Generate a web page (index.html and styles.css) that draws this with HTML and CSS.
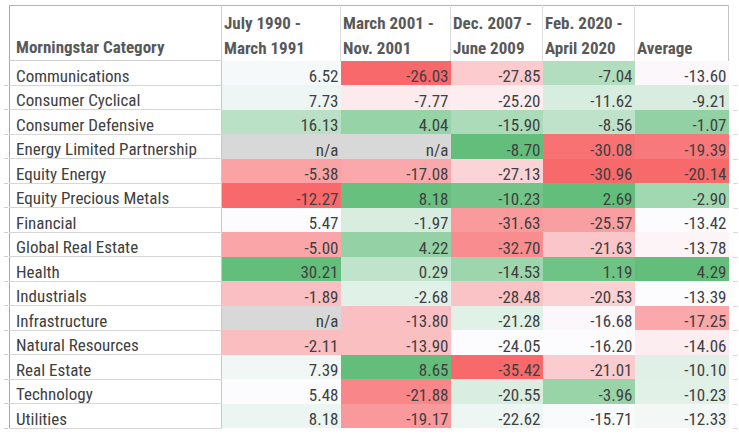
FILE: index.html
```html
<!DOCTYPE html>
<html lang="en">
<head>
<meta charset="utf-8">
<title>Morningstar Category returns</title>
<link rel="stylesheet" href="styles.css">
</head>
<body>
<div class="sheet">
  <table class="grid" id="grid">
    <colgroup>
      <col class="c-cat"><col class="c-1"><col class="c-2"><col class="c-3"><col class="c-4"><col class="c-5">
    </colgroup>
    <thead>
      <tr>
        <th class="cat">Morningstar Category</th>
        <th>July 1990 -<br>March 1991</th>
        <th>March 2001 -<br>Nov. 2001</th>
        <th>Dec. 2007 -<br>June 2009</th>
        <th>Feb. 2020 -<br>April 2020</th>
        <th class="last">Average</th>
      </tr>
    </thead>
    <tbody>
      <tr><td class="name">Communications</td><td class="num">6.52</td><td class="num">-26.03</td><td class="num">-27.85</td><td class="num">-7.04</td><td class="num">-13.60</td></tr>
      <tr><td class="name">Consumer Cyclical</td><td class="num">7.73</td><td class="num">-7.77</td><td class="num">-25.20</td><td class="num">-11.62</td><td class="num">-9.21</td></tr>
      <tr><td class="name">Consumer Defensive</td><td class="num">16.13</td><td class="num">4.04</td><td class="num">-15.90</td><td class="num">-8.56</td><td class="num">-1.07</td></tr>
      <tr><td class="name">Energy Limited Partnership</td><td class="num na">n/a</td><td class="num na">n/a</td><td class="num">-8.70</td><td class="num">-30.08</td><td class="num">-19.39</td></tr>
      <tr><td class="name">Equity Energy</td><td class="num">-5.38</td><td class="num">-17.08</td><td class="num">-27.13</td><td class="num">-30.96</td><td class="num">-20.14</td></tr>
      <tr><td class="name">Equity Precious Metals</td><td class="num">-12.27</td><td class="num">8.18</td><td class="num">-10.23</td><td class="num">2.69</td><td class="num">-2.90</td></tr>
      <tr><td class="name">Financial</td><td class="num">5.47</td><td class="num">-1.97</td><td class="num">-31.63</td><td class="num">-25.57</td><td class="num">-13.42</td></tr>
      <tr><td class="name">Global Real Estate</td><td class="num">-5.00</td><td class="num">4.22</td><td class="num">-32.70</td><td class="num">-21.63</td><td class="num">-13.78</td></tr>
      <tr><td class="name">Health</td><td class="num">30.21</td><td class="num">0.29</td><td class="num">-14.53</td><td class="num">1.19</td><td class="num">4.29</td></tr>
      <tr><td class="name">Industrials</td><td class="num">-1.89</td><td class="num">-2.68</td><td class="num">-28.48</td><td class="num">-20.53</td><td class="num">-13.39</td></tr>
      <tr><td class="name">Infrastructure</td><td class="num na">n/a</td><td class="num">-13.80</td><td class="num">-21.28</td><td class="num">-16.68</td><td class="num">-17.25</td></tr>
      <tr><td class="name">Natural Resources</td><td class="num">-2.11</td><td class="num">-13.90</td><td class="num">-24.05</td><td class="num">-16.20</td><td class="num">-14.06</td></tr>
      <tr><td class="name">Real Estate</td><td class="num">7.39</td><td class="num">8.65</td><td class="num">-35.42</td><td class="num">-21.01</td><td class="num">-10.10</td></tr>
      <tr><td class="name">Technology</td><td class="num">5.48</td><td class="num">-21.88</td><td class="num">-20.55</td><td class="num">-3.96</td><td class="num">-10.23</td></tr>
      <tr class="final"><td class="name">Utilities</td><td class="num">8.18</td><td class="num">-19.17</td><td class="num">-22.62</td><td class="num">-15.71</td><td class="num">-12.33</td></tr>
    </tbody>
  </table>
</div>
<script src="script.js"></script>
</body>
</html>
```
FILE: styles.css
```css
html, body {
  margin: 0;
  padding: 0;
  background: #ffffff;
}
.sheet {
  padding: 5px 0 0 9px;
}
.grid {
  border-collapse: collapse;
  table-layout: fixed;
  width: 719px;
  font-family: Roboto, "Liberation Sans", sans-serif;
  font-stretch: 85%;
  color: #404040;
}
.c-cat { width: 212px; }
.c-1 { width: 119px; }
.c-2 { width: 110px; }
.c-3 { width: 92px; }
.c-4 { width: 92px; }
.c-5 { width: 94px; }

.grid th {
  height: 54px;
  padding: 0 2px 0 2px;
  text-align: left;
  vertical-align: bottom;
  font-size: 17px;
  font-stretch: 86%;
  line-height: 25px;
  font-weight: bold;
  color: #595959;
  border-top: 1px solid #b4b4b4;
  border-right: 1px solid #dcdcdc;
  white-space: nowrap;
}
.grid th.cat {
  padding-left: 6px;
  border-left: 1px solid #a8a8a8;
  border-bottom: 1px solid #d0d0d0;
  border-right: 1px solid #d0d0d0;
}
.grid th.last {
  border-right: 1px solid #c4c4c4;
}
.grid td {
  position: relative;
  height: 23.5px;
  padding: 0 2px 0 2px;
  font-size: 17px;
  line-height: 18px;
  vertical-align: bottom;
  white-space: nowrap;
}
.grid td.name {
  padding-left: 6px;
  border-left: 1px solid #a8a8a8;
  border-right: 1px solid #c8c8c8;
  border-bottom: 1px solid #d6d6d6;
}
.grid td.num {
  text-align: right;
  padding-right: 2px;
}
.grid td.na {
  background: #d8d8d8;
}

/* faint gridline stubs of the neighbouring sheet cells */
.grid td.name::before {
  content: "";
  position: absolute;
  left: -6px;
  bottom: -1px;
  width: 4px;
  height: 1px;
  background: #cfcfcf;
}
.grid td:last-child::after {
  content: "";
  position: absolute;
  right: -9px;
  bottom: -1px;
  width: 5px;
  height: 1px;
  background: #dadada;
}
.grid tr.final td.num::before {
  content: "";
  position: absolute;
  right: -1px;
  bottom: -6px;
  width: 1px;
  height: 4px;
  background: #dadada;
}
```
FILE: script.js
```js
(function () {
  var red = [248, 105, 107], mid = [252, 252, 255], green = [99, 190, 123];
  var table = document.getElementById('grid');
  var rows = table.tBodies[0].rows;
  function mix(a, b, t) {
    return 'rgb(' + [0, 1, 2].map(function (i) { return Math.round(a[i] + (b[i] - a[i]) * t); }).join(',') + ')';
  }
  for (var c = 1; c <= 5; c++) {
    var vals = [];
    for (var r = 0; r < rows.length; r++) {
      var v = parseFloat(rows[r].cells[c].textContent);
      if (!isNaN(v)) vals.push(v);
    }
    var s = vals.slice().sort(function (a, b) { return a - b; });
    var min = s[0], max = s[s.length - 1];
    var k = 0.5 * (s.length - 1), lo = Math.floor(k), hi = Math.ceil(k);
    var med = s[lo] + (s[hi] - s[lo]) * (k - lo);
    for (var r2 = 0; r2 < rows.length; r2++) {
      var cell = rows[r2].cells[c];
      var x = parseFloat(cell.textContent);
      if (isNaN(x)) continue;
      var col;
      if (x <= med) col = mix(red, mid, (x - min) / (med - min));
      else col = mix(mid, green, (x - med) / (max - med));
      cell.style.backgroundColor = col;
    }
  }
})();
```
